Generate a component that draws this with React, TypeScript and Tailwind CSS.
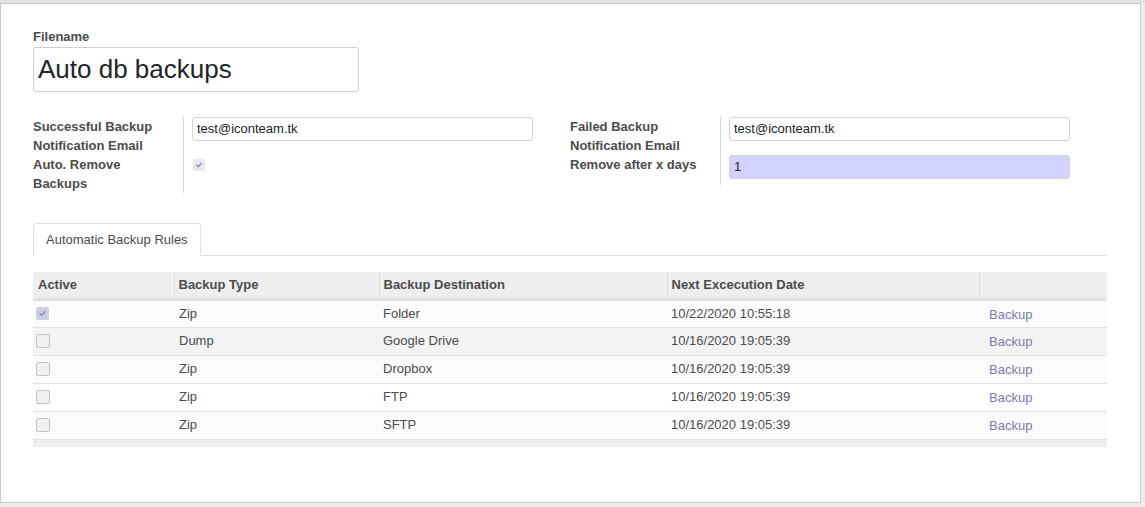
import React from 'react';

type Rule = {
  active: boolean;
  type: string;
  dest: string;
  next: string;
  bg: string;
};

const rules: Rule[] = [
  { active: true, type: 'Zip', dest: 'Folder', next: '10/22/2020 10:55:18', bg: 'bg-[#fbfbfb]' },
  { active: false, type: 'Dump', dest: 'Google Drive', next: '10/16/2020 19:05:39', bg: 'bg-[#f3f3f3]' },
  { active: false, type: 'Zip', dest: 'Dropbox', next: '10/16/2020 19:05:39', bg: 'bg-[#fbfbfb]' },
  { active: false, type: 'Zip', dest: 'FTP', next: '10/16/2020 19:05:39', bg: 'bg-white' },
  { active: false, type: 'Zip', dest: 'SFTP', next: '10/16/2020 19:05:39', bg: 'bg-[#fbfbfb]' },
];

function CheckMark({ size }: { size: number }) {
  return (
    <svg width={size} height={size} viewBox="0 0 12 12" fill="none">
      <path d="M3.2 6.3 5 8 8.8 4" stroke="#8a8ab5" strokeWidth="1.6" strokeLinecap="round" strokeLinejoin="round" />
    </svg>
  );
}

function DisabledCheck({ checked }: { checked: boolean }) {
  if (checked) {
    return (
      <span className="flex h-[13px] w-[13px] items-center justify-center rounded-[2px] bg-[#cdcde3]">
        <CheckMark size={11} />
      </span>
    );
  }
  return <span className="block h-[14px] w-[14px] rounded-[2px] border border-[#c2c2c2] bg-[#f0f0f0]" />;
}

const inputCls =
  'h-[24px] w-[341px] rounded-[3px] border border-[#d4d4d4] px-[4px] text-[13px] leading-[22px] text-[#212529]';

export default function App() {
  return (
    <div className="h-[507px] w-[1145px] bg-[repeating-conic-gradient(#e9e9e9_0%_25%,#f3f3f3_0%_50%)] bg-[length:4px_4px] font-['Liberation_Sans',Arial,sans-serif] text-[#4c4c4c]">
      <div className="h-[3px] bg-[#e2e2e2]" />
      <div className="h-[500px] w-[1141px] border border-[#c9c9d4] bg-white pl-[32px] pr-[33px] pt-[23px]">
        {/* title */}
        <div className="text-[13px] font-bold leading-[20px]">Filename</div>
        <div className="flex h-[45px] w-[326px] items-center rounded-[3px] border border-[#cfcfcf] px-[4px] text-[26px] text-[#212529]">
          Auto db backups
        </div>

        {/* groups */}
        <div className="mt-[25px] flex items-start gap-[37px]">
          <div className="grid grid-cols-[150px_350px] text-[13px] leading-[19px]">
            <div className="h-[38px] pr-[16px] font-bold">Successful Backup Notification Email</div>
            <div className="border-l border-[#d8d8d8] pl-[8px]">
              <div className={inputCls}>test@iconteam.tk</div>
            </div>
            <div className="h-[38px] pr-[16px] font-bold">Auto. Remove Backups</div>
            <div className="border-l border-[#d8d8d8] pl-[9px] pt-[4px]">
              <span className="flex h-[12px] w-[12px] items-center justify-center rounded-[2px] bg-[#e8e8f0]">
                <CheckMark size={10} />
              </span>
            </div>
          </div>
          <div className="grid grid-cols-[150px_350px] text-[13px] leading-[19px]">
            <div className="h-[38px] pr-[16px] font-bold">Failed Backup Notification Email</div>
            <div className="border-l border-[#d8d8d8] pl-[8px]">
              <div className={inputCls}>test@iconteam.tk</div>
            </div>
            <div className="h-[30px] font-bold">Remove after x days</div>
            <div className="border-l border-[#d8d8d8] pl-[8px]">
              <div className={`${inputCls} bg-[#d2d2ff]`}>1</div>
            </div>
          </div>
        </div>

        {/* tabs */}
        <div className="mt-[30px] flex border-b border-[#dee2e6]">
          <div className="-mb-px h-[33px] rounded-t-[3px] border border-b-white border-[#dee2e6] bg-white px-[12px] text-[13px] leading-[31px]">
            Automatic Backup Rules
          </div>
        </div>

        {/* list */}
        <table className="mt-[16px] w-[1074px] table-fixed border-collapse text-[13px]">
          <colgroup>
            <col className="w-[141px]" />
            <col className="w-[205px]" />
            <col className="w-[288px]" />
            <col className="w-[312px]" />
            <col className="w-[128px]" />
          </colgroup>
          <thead>
            <tr className="h-[27px] border-b-[3px] border-[#dee2e6] bg-[#eeeeee] text-left font-bold">
              <th className="px-[5px]">Active</th>
              <th className="border-l border-[#dcdcdc] px-[4px]">Backup Type</th>
              <th className="border-l border-[#dcdcdc] px-[4px]">Backup Destination</th>
              <th className="border-l border-[#dcdcdc] px-[4px]">Next Excecution Date</th>
              <th className="border-l border-[#dcdcdc] px-[4px]"></th>
            </tr>
          </thead>
          <tbody>
            {rules.map((r, i) => (
              <tr key={i} className={`h-[28px] border-b border-[#dee2e6] ${r.bg}`}>
                <td className="px-[3px]">
                  <DisabledCheck checked={r.active} />
                </td>
                <td className="px-[5px]">{r.type}</td>
                <td className="px-[4px]">{r.dest}</td>
                <td className="px-[4px]">{r.next}</td>
                <td className="px-[10px] pt-[2px] text-[#7c7bad]">Backup</td>
              </tr>
            ))}
          </tbody>
        </table>
        <div className="h-[7px] w-[1074px] bg-[#eeeeee]" />
      </div>
    </div>
  );
}
